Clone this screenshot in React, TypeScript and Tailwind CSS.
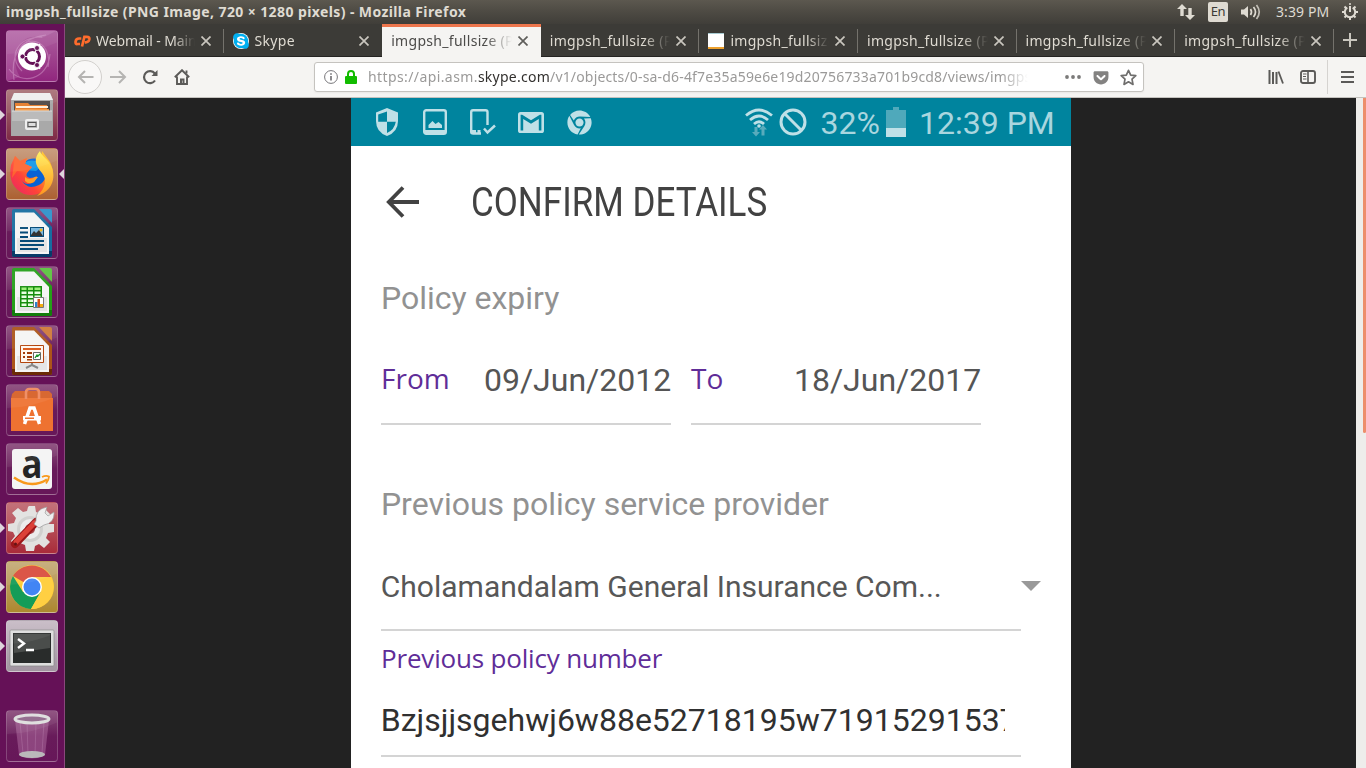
import type { ReactNode } from 'react';
import { FaChrome, FaGetPocket, FaSkype } from 'react-icons/fa';

const UI = "font-['Noto_Sans','Open_Sans',sans-serif]";

function Label({ children, className = '' }: { children: ReactNode; className?: string }) {
  return <span className={`inline-block origin-left whitespace-pre ${className}`}>{children}</span>;
}

function Panel() {
  return (
    <header className={`flex h-6 shrink-0 items-center justify-between bg-linear-to-b from-[#5c584f] via-[#4d4a43] to-[#403e39] pl-[6px] pr-[7px] ${UI}`}>
      <Label className="w-[465px] text-[14px] font-bold leading-6 tracking-[0.4px] text-[#dfdbd2]">
        imgpsh_fullsize (PNG Image, 720 × 1280 pixels) - Mozilla Firefox
      </Label>
      <div className="flex items-center text-[#dfdbd2]">
        <svg width="18" height="18" viewBox="0 0 18 18" fill="#dfdbd2" className="mr-[13px]">
          <path d="M5 1 0 6h3.300v7h3.400V6H10zM13 17l5-5h-3.300V5h-3.400v7H8z" />
        </svg>
        <span className="mr-[12px] flex h-5 w-5 items-center justify-center rounded-[2px] bg-[#dfdbd2] text-[13px] tracking-[-0.3px] text-[#3c3b37]">En</span>
        <svg width="22" height="18" viewBox="0 0 22 18" fill="none" stroke="#dfdbd2" strokeWidth="1.700" className="mr-[14px]">
          <path d="M1 6.500h3L8 3v12l-4-3.500H1z" fill="#dfdbd2" stroke="none" />
          <path d="M10.500 6q2 3 0 6M13.500 4q4 5 0 10" />
          <path d="M16.500 2q5.500 7 0 14" opacity=".8" />
        </svg>
        <Label className="w-[53px] text-[14px] leading-6 tracking-[0.1px]">3:39 PM</Label>
        <svg width="18" height="18" viewBox="0 0 18 18" fill="none" stroke="#dfdbd2" className="ml-[12px]">
          <path d="M6.300 4.600a5.200 5.200 0 1 0 5.400 0M9 3v6" strokeWidth="2" />
          <path d="m3.500 3.500 2 2m9-2-2 2M1 9h2.500M14.500 9H17M3.500 14.500l2-2m9 2-2-2M9 14.500V17" strokeWidth="2" />
          <path d="M9 0v2" strokeWidth="1.500" />
        </svg>
      </div>
    </header>
  );
}

function Tile({ bg, running, focused, children }: { bg: string; running?: boolean; focused?: boolean; children: ReactNode }) {
  return (
    <div className="relative flex h-[52px] w-[52px] shrink-0 items-center justify-center">
      {running && <span className="absolute -left-[6px] top-[21px] h-0 w-0 border-y-[5px] border-l-[5px] border-y-transparent border-l-[#ded5dc]" />}
      {focused && <span className="absolute -right-[6px] top-[21px] h-0 w-0 border-y-[5px] border-r-[5px] border-y-transparent border-r-[#ded5dc]" />}
      <div className={`h-[52px] w-[52px] overflow-hidden rounded-[4px] border border-white/20 ${bg}`}>
        <svg width="50" height="50" viewBox="1 1 50 50">
          {children}
          <path d="M0 0h52v12Q26 24 0 24z" fill="#fff" opacity=".06" />
        </svg>
      </div>
    </div>
  );
}

function Doc({ color, dark, fold, children }: { color: string; dark: string; fold: string; children: ReactNode }) {
  return (
    <>
      <path d="M8 2h20l18 18v28q0 2-2 2H8q-2 0-2-2V4q0-2 2-2z" fill={color} />
      <path d="M6 44h40v4q0 2-2 2H8q-2 0-2-2z" fill={dark} />
      <path d="M9 5.500h19L43 21v26H9z" fill="#f5f5f5" />
      <path d="M11 31h30v14H11z" fill="#e5e5e5" />
      <path d="M33 2h11q2 0 2 2v12z" fill={fold} />
      {children}
    </>
  );
}

function Launcher() {
  const purple = 'bg-linear-to-b from-[#8b4b7c] via-[#681b5a] to-[#671759]';
  return (
    <aside className="flex w-[65px] shrink-0 flex-col border-r border-[#8b477d] bg-[#651157] px-[6px] pt-[6px]">
      <div className="flex flex-col gap-[7px]">
        <Tile bg="bg-linear-to-b from-[#ad5e9f] to-[#91267e]">
          <g fill="none" stroke="#d49aca" strokeWidth="1.200" opacity=".5">
            <path d="M8 50C4 26 14 8 40 5M3 39C15 56 42 50 44 24M13 20C22 2 47 13 42 37M16 41C1 26 12 7 36 7" />
          </g>
          <path d="M0 0h52L36 8Q17 2 10 23 7 35 14 47L0 51z" fill="#e5b4db" opacity=".18" />
          <circle cx="26" cy="26.500" r="14" fill="#fff" />
          <circle cx="26.500" cy="26.500" r="7" fill="none" stroke="#651157" strokeWidth="3" />
          <g stroke="#fff" strokeWidth="1.200">
            <path d="M14 26.500h7M29 22l5-8M29 31l5 8" />
          </g>
          <g fill="#651157" stroke="#fff" strokeWidth=".8">
            <circle cx="16.500" cy="26.500" r="2.500" /><circle cx="31" cy="18" r="2.500" /><circle cx="31" cy="35" r="2.500" />
          </g>
        </Tile>
        <Tile bg="bg-linear-to-b from-[#a97378] to-[#7e2946]" running>
          <path d="m8 4 36 0 3 7v36H5V11z" fill="#a7a7a7" />
          <path d="m8 4 36 0 3 7H5z" fill="#eee" />
          <path d="M8 12h36v13H8z" fill="#4b4744" />
          <path d="M9 14h13l2 2h17v9H9z" fill="#e57b27" />
          <path d="M10 17h32v2H10z" fill="#fff0d8" /><path d="M9 20h34v2H9z" fill="#f49a45" />
          <path d="M6 22h40v25H6z" fill="#a9a9a9" /><path d="M6 22h40v10H6z" fill="#bbb" />
          <path d="M6 22h40" stroke="#d9d9d9" />
          <rect x="20" y="31" width="12" height="9" rx="1" fill="#b8b8b8" stroke="#eee" strokeWidth="2" />
          <rect x="22" y="33.500" width="8" height="4" fill="#ddd" stroke="#555" />
        </Tile>
        <Tile bg="bg-linear-to-b from-[#c59777] to-[#ac6132]" running focused>
          <defs>
            <linearGradient id="fox" x1="0" y1="1" x2="1" y2="0"><stop stopColor="#e8216d" /><stop offset=".35" stopColor="#ff4438" /><stop offset=".65" stopColor="#ff9a20" /><stop offset="1" stopColor="#ffdf35" /></linearGradient>
            <linearGradient id="tail" x1="0" y1="0" x2="0" y2="1"><stop stopColor="#fff05a" /><stop offset="1" stopColor="#ff9420" /></linearGradient>
          </defs>
          <circle cx="28" cy="25" r="14.500" fill="#0862d5" />
          <path d="M18 15q10-6 18 3l-6 5-11-1z" fill="#1598e8" />
          <path d="M5 17 9 8l5 5 7-3-2 6 7 3-5 6q-2 4 3 5 4 0 7-2l-3 6q-8 5-13-2 6 11 18 5 10-6 8-20l-6-7 1-7 8 11q7 14-2 25-10 11-24 7Q1 38 5 17z" fill="url(#fox)" />
          <path d="M34 3c1 5 8 7 12 17 5 14-4 25-15 28 9-8 10-17 5-23-8-9-8-15-2-22z" fill="url(#tail)" />
          <path d="m9 8 5 5 7-3-2 6 7 3-5 5-10-1-5 7z" fill="#ff6430" />
          <path d="M19 29q4 4 10 0h3l-4 5q-5 3-9-1z" fill="#ff9e28" />
        </Tile>
        <Tile bg={purple}>
          <Doc color="#176da0" dark="#073b68" fold="#2d91c9">
            <g fill="#064b78">
              <path d="M14 20h8v2h-8zM14 24.500h8v2h-8zM14 29h8v2h-8zM14 33h24v2H14zM14 37h24v2H14zM14 41h18v2H14z" />
              <path d="M24 20h14v10H24z" />
            </g>
            <path d="M25 21h12v8H25z" fill="#7fb9df" /><path d="m25 28 3-4 2 2 3-3 4 6H25z" fill="#333" /><circle cx="35" cy="23" r="1.500" fill="#f5b51b" />
          </Doc>
        </Tile>
        <Tile bg={purple}>
          <Doc color="#25a019" dark="#127d0b" fold="#5bc33e">
            <path d="M14 20h22v21H14z" fill="#168d0d" />
            <g fill="#9df079">
              <path d="M15.500 21.500h5v2.500h-5zM22 21.500h5v2.500h-5zM28.500 21.500h6v2.500h-6z" />
              <path fill="#e8ffe1" d="M15.500 25.500h5V28h-5zM22 25.500h5V28h-5zM28.500 25.500h6V28h-6zM15.500 29.500h5V32h-5zM22 29.500h5V32h-5zM28.500 29.500h6V32h-6zM15.500 33.500h5V36h-5zM22 33.500h5V36h-5zM15.500 37.500h5V40h-5zM22 37.500h5V40h-5z" />
            </g>
            <path d="M27.500 31.500h10v10h-10z" fill="#fff" stroke="#777" />
            <path d="M29 36h2.500v5H29z" fill="#2d82cc" /><path d="M31.500 33H34v8h-2.500z" fill="#d74e13" /><path d="M34 38h3v3h-3z" fill="#f3ad10" />
          </Doc>
        </Tile>
        <Tile bg={purple}>
          <Doc color="#ac541a" dark="#6b2b06" fold="#cf7938">
            <path d="M14.500 20.500h23v17h-23z" fill="#fff7ef" stroke="#b3450d" />
            <path d="M17 23h18v2H17z" fill="#dc5e21" />
            <path d="M17 27h2v2h-2zM17 31h2v2h-2zM21 27h5v2h-5zM21 31h5v2h-5zM21 34h5v1.500h-5z" fill="#a23c0a" />
            <path d="M27.500 27.500h7v7h-7z" fill="#fff" stroke="#666" /><path d="m29 33 2-3 1 1 2-2" fill="none" stroke="#179329" strokeWidth="1.300" />
            <path d="M26 38v2l-6 3m6-3 6 3" fill="none" stroke="#888" strokeWidth="2" />
          </Doc>
        </Tile>
        <Tile bg={purple}>
          <path d="m6 10 3-3h34l3 3v5H5z" fill="#d65f26" />
          <path d="M5 14h42v33H5z" fill="#ee7231" />
          <path d="M20 15V8.500q0-3.500 3.500-3.500h6q3.500 0 3.500 3.500V15" fill="none" stroke="#ef895e" strokeWidth="2.600" />
          <path d="M18.500 40 24 24h4l5.500 16" fill="none" stroke="#fff" strokeWidth="3.500" />
          <path d="M17 32h18v4.500H17z" fill="#fff" /><path d="M19 34.300h9" stroke="#ee7231" strokeWidth="1.400" />
        </Tile>
        <Tile bg={purple}>
          <rect x="6" y="6" width="40" height="40" rx="3" fill="#f4f4f4" />
          <text x="15.500" y="34.500" textLength="21" lengthAdjust="spacingAndGlyphs" fontFamily="Open Sans" fontWeight="700" fontSize="40" fill="#252525">a</text>
          <path d="M8 34.500q17 12 33 2" fill="none" stroke="#f8991c" strokeWidth="2.500" />
          <path d="M36 34q4-2 7-.5 0 3-3 7" fill="none" stroke="#f8991c" strokeWidth="1.800" />
        </Tile>
        <Tile bg="bg-linear-to-b from-[#bf6972] to-[#a92b3a]" running>
          <path d="m22 5 1-1h6l1 6 5 2 5-4 5 5-4 5 2 4h5v8l-6 1-2 5 4 4-6 6-5-4-4 2-1 5h-8l-1-6-5-2-5 4-4-6 4-5-2-4-5-1v-7l6-1 2-5-4-5 6-5 5 4 4-1z" fill="#e2e2e0" />
          <circle cx="24" cy="27" r="13" fill="#d0d0ce" /><circle cx="24" cy="27" r="10" fill="#ececec" /><circle cx="24" cy="27" r="5" fill="#aa4b50" />
          <path d="M9 42 30 20" stroke="#9d1719" strokeWidth="8" strokeLinecap="round" /><path d="M10 40 28.500 21" stroke="#dc4038" strokeWidth="5" strokeLinecap="round" />
          <path d="M30 19q-1-12 11-14l-2 6 3 3 6-4q1 11-10 13l-5 3-5-4z" fill="#eee" stroke="#999" strokeWidth=".7" />
          <circle cx="9.500" cy="42" r="1.500" fill="#641415" />
        </Tile>
        <Tile bg="bg-linear-to-b from-[#c5ab78] to-[#ad882e]" running>
          <circle cx="26" cy="26" r="22" fill="#fc3" />
          <path d="M26 26 7 15A22 22 0 0 1 45 16H26z" fill="#d94c3d" />
          <path d="M7 15A22 22 0 0 0 25 48L34.700 31H17z" fill="#149c58" />
          <path d="M45 16H26v10l8.700 5L25 48A22 22 0 0 0 45 16z" fill="#ffcf42" />
          <circle cx="26" cy="26" r="10" fill="#fff" /><circle cx="26" cy="26" r="8.500" fill="#4285f4" />
        </Tile>
        <Tile bg="bg-linear-to-b from-[#c7bac5] to-[#a194a0]" running>
          <rect x="4" y="10" width="44" height="36" rx="1" fill="#dedede" stroke="#888" strokeWidth=".7" />
          <path d="M7 13h38v30H7z" fill="#292c2b" /><path d="M8 14h36v14L8 33z" fill="#4a4d4b" />
          <path d="m12 19 6 4.500-6 4.500M20 30h8" fill="none" stroke="#fff" strokeWidth="2.400" />
        </Tile>
      </div>
      <div className="mt-[38px]">
        <Tile bg={purple}>
          <path d="m9 10 4 35q13 7 26 0l4-35z" fill="#ba79ab" opacity=".45" />
          <path d="m14 12 3 31m4-31 1 33m16-33-2 31m-6-31-1 33" stroke="#d4a5cc" strokeWidth=".7" opacity=".35" />
          <ellipse cx="26" cy="44.500" rx="13" ry="3.500" fill="#bab9ba" />
          <ellipse cx="26" cy="9" rx="17" ry="4" fill="#8f668a" stroke="#dedede" strokeWidth="3" />
        </Tile>
      </div>
    </aside>
  );
}

const tabs = [
  { title: 'Webmail - Main', icon: 'cpanel' },
  { title: 'Skype', icon: 'skype' },
  { title: 'imgpsh_fullsize (PNG', active: true },
  { title: 'imgpsh_fullsize (PNG' },
  { title: 'imgpsh_fullsize (PNG', icon: 'page' },
  { title: 'imgpsh_fullsize (PNG' },
  { title: 'imgpsh_fullsize (PNG' },
  { title: 'imgpsh_fullsize (PNG' },
];

function TabStrip() {
  return (
    <div className={`flex h-[33px] shrink-0 border-b border-[#252422] bg-[#3c3b37] ${UI}`}>
      {tabs.map((t, i) => (
        <div key={i} className={`relative flex h-[33px] w-[158.600px] shrink-0 items-center pr-[13px] ${t.active ? 'border-t-[3px] border-[#ed764d] bg-[#f5f4f2] pb-[3px] pl-[9px]' : 'pl-[9px]'}`}>
          {t.icon === 'cpanel' && (
            <svg width="17" height="16" viewBox="0 0 17 16" fill="none" stroke="#ff6c2c" strokeWidth="2.700" className="mr-[5px] shrink-0">
              <path d="M7.300 5.500H5Q2 5.500 1.600 8.500T3.600 11H6M8 13.500l2.400-9.700h2.300q3.200 0 2.600 2.700-.700 2.800-3.500 2.800h-1" />
            </svg>
          )}
          {t.icon === 'skype' && (
            <span className="mr-[6px] flex h-4 w-4 shrink-0 items-center justify-center rounded-full bg-white">
              <FaSkype className="h-[18px] w-[18px] shrink-0 text-[#00aff0]" />
            </span>
          )}
          {t.icon === 'page' && <span className="mr-[6px] h-4 w-4 shrink-0 border-b-2 border-t border-b-[#eda12e] border-t-[#a8cbd2] bg-white" />}
          <div className={`min-w-0 flex-1 overflow-hidden whitespace-nowrap text-[14px] leading-5 mask-r-from-78% mask-r-to-100% ${i === 0 ? 'tracking-[-0.1px]' : 'tracking-[0.3px]'} ${t.active ? 'text-[#4c4b49]' : 'text-[#dfdbd2]'}`}>{t.title}</div>
          <svg width="10" height="10" viewBox="0 0 10 10" className="ml-[6px] shrink-0" stroke={t.active ? '#5f5e5b' : '#c9c6be'} strokeWidth="1.700"><path d="m.500.500 9 9m0-9-9 9" /></svg>
          {!t.active && i !== 1 && <span className="absolute right-0 top-[5px] h-6 w-px bg-[#74726c]" />}
        </div>
      ))}
      <div className="flex flex-1 items-center justify-center pb-px">
        <svg width="14" height="14" stroke="#c9c6be" strokeWidth="2"><path d="M7 0v14M0 7h14" /></svg>
      </div>
    </div>
  );
}

function Toolbar() {
  return (
    <div className={`flex h-[41px] shrink-0 items-center border-b border-[#c4c2be] bg-[#f5f4f2] pl-[3px] pr-[12px] ${UI}`}>
      <span className="flex h-[34px] w-[34px] items-center justify-center rounded-full border border-[#d2d0cd] bg-[#f9f8f7]">
        <svg width="17" height="14" viewBox="0 0 17 14" fill="none" stroke="#b5b4b2" strokeWidth="2"><path d="M16.500 7H2M8 1 2 7l6 6" /></svg>
      </span>
      <svg width="17" height="14" viewBox="0 0 17 14" fill="none" stroke="#b5b4b2" strokeWidth="2" className="ml-[7.500px]"><path d="M0 7h15M9 1l6 6-6 6" /></svg>
      <svg width="16" height="16" viewBox="0 0 16 16" fill="none" stroke="#5b5a58" strokeWidth="2.200" className="ml-[15px]"><path d="M13 11.500A6 6 0 1 1 12.800 4.500" /><path d="M15.500 1v6h-6z" fill="#5b5a58" stroke="none" /></svg>
      <svg width="16" height="16" viewBox="0 0 16 16" fill="none" stroke="#5b5a58" strokeWidth="1.900" className="ml-[16px]"><path d="M.800 8.300 8 1.200l7.200 7.100M3 7.500V15h10V7.500" /><path d="M7 15v-4.500h2.500V15" strokeWidth="2" /><path d="M12.500 1.500v3" /></svg>
      <div className="ml-[124px] flex h-[30px] w-[830px] shrink-0 items-center rounded-[3px] border border-[#c5c3bf] bg-white pl-[9px] pr-[6px] shadow-xs">
        <svg width="14" height="14" viewBox="0 0 14 14" fill="none" stroke="#77767a"><circle cx="7" cy="7" r="6.400" /><path d="M7 6v4.500M7 3.200v1.500" strokeWidth="1.700" /></svg>
        <svg width="12" height="14" viewBox="0 0 12 14" className="ml-[7px]"><path d="M3 7V4a3 3 0 0 1 6 0v3" fill="none" stroke="#12bc00" strokeWidth="2" /><rect y="6" width="12" height="8" rx="1" fill="#12bc00" /></svg>
        <div className="ml-[11.500px] w-[660px] overflow-hidden whitespace-nowrap text-[14px] leading-6 tracking-[0.17px] text-[#9b9a99] mask-r-from-96% mask-r-to-100%">
          <span className="tracking-[0.4px]">https://api.asm.</span><span className="tracking-[0.25px] text-[#33312f]">skype.com</span>/v1/objects/0-sa-d6-4f7e35a59e6e19d20756733a701b9cd8/views/imgpsh
        </div>
        <svg width="16" height="4" viewBox="0 0 16 4" fill="#7b7a79" className="ml-auto"><circle cx="2" cy="2" r="1.900" /><circle cx="8" cy="2" r="1.900" /><circle cx="14" cy="2" r="1.900" /></svg>
        <FaGetPocket className="ml-[12px] h-[17px] w-4 text-[#838281]" />
        <svg width="17" height="17" viewBox="0 0 17 17" fill="none" stroke="#6f6e6d" strokeWidth="1.700" strokeLinejoin="round" className="ml-[11px]"><path d="m8.500 1.300 2.200 4.800 5.100.600-3.800 3.500 1 5.200-4.500-2.600L4 15.400l1-5.200-3.800-3.500 5.100-.600z" /></svg>
      </div>
      <svg width="16" height="14" viewBox="0 0 16 14" fill="none" stroke="#5b5a58" className="ml-auto"><path d="M1.500 0v14M5 2v12M8.500 2v12" strokeWidth="2" /><path d="m10.500 1.500 4.500 12" strokeWidth="1.800" /></svg>
      <svg width="16" height="14" viewBox="0 0 16 14" fill="none" stroke="#5b5a58" className="ml-[16px]"><rect x="1" y="1" width="14" height="12" rx="2" strokeWidth="1.900" /><path d="M8 1v12" strokeWidth="1.600" /><path d="M3 4h3.500M3 6.500h3M3 9h3.500" /></svg>
      <span className="ml-[11px] h-[34px] w-px bg-[#d5d3d0]" />
      <svg width="13" height="12" stroke="#5b5a58" strokeWidth="2" className="ml-[13px]"><path d="M0 1h13M0 6h13M0 11h13" /></svg>
    </div>
  );
}

function StatusBar() {
  const c = '#bfe0e7';
  return (
    <div className="flex h-12 items-center bg-[#00849e] pl-[24px] font-[Roboto,sans-serif] text-[32px] text-[#a9d6df]">
      <svg width="24" height="28" viewBox="0 0 24 28"><path d="M12 0 1 4.500V13q0 11 11 15 11-4 11-15V4.500z" fill={c} /><path d="M12 3.500v10.300H3.200V6.500zM12 13.800h8.800q-1.300 8-8.800 11.200z" fill="#00849e" /></svg>
      <svg width="24" height="26" viewBox="0 0 24 26" className="ml-[24px]"><rect x="1.200" y="1.200" width="21.600" height="23.600" rx="2" fill="none" stroke={c} strokeWidth="2.400" /><path d="M1 21h22v4H1zM5.500 19v-3l4-4 3 3 3-2 3.500 3v3z" fill={c} /></svg>
      <svg width="26" height="26" viewBox="0 0 26 26" fill="none" stroke={c} className="ml-[23px]"><path d="M17.500 16V3q0-1.800-2-1.800H3Q1.200 1.200 1.200 3v20q0 1.500 2 1.500H11" strokeWidth="2.400" /><path d="M1 22.500h5M7.500 22.500h3" strokeWidth="3" /><path d="m14 19.500 3.500 4 7.500-7" strokeWidth="2.500" /></svg>
      <svg width="26" height="21" viewBox="2 4 20 16" preserveAspectRatio="none" className="ml-[22px]"><path fillRule="evenodd" fill={c} d="M20 18h-2V9.250L12 13 6 9.250V18H4V6h1.200l6.800 4.250L18.800 6H20zM20 4H4a2 2 0 0 0-2 2v12a2 2 0 0 0 2 2h16a2 2 0 0 0 2-2V6a2 2 0 0 0-2-2z" /></svg>
      <FaChrome className="ml-[23px] h-[25px] w-[25px] shrink-0 text-[#bfe0e7]" />
      <svg width="28" height="29" viewBox="0 0 28 29" fill="none" stroke={c} strokeWidth="2.800" className="ml-[153px]"><path d="M1 7.500q13-11 26 0M5 12q9-8 18 0M9 16q5-4.500 10 0" /><circle cx="14" cy="18" r="1.800" fill={c} stroke="none" /><path d="M7 24h2.500v-5h3v5H15l-4 4.500zM14 21.500l4-4.500 4 4.500h-2.500v6h-3v-6z" fill="#58abbc" stroke="none" /></svg>
      <svg width="28" height="28" viewBox="0 0 28 28" fill="none" stroke={c} strokeWidth="3" className="ml-[6.500px]"><circle cx="14" cy="14" r="12" /><path d="m5.500 5.500 17 17" /></svg>
      <Label className="ml-[13.500px] w-[60px] pt-[2px] leading-[48px]">32%</Label>
      <svg width="20" height="30" viewBox="0 0 20 30" className="ml-[5px]"><path d="M0 3h7V0h6v3h7v18H0z" fill="#4fa9bb" /><path d="M0 21h20v9H0z" fill={c} /></svg>
      <Label className="ml-[13.500px] w-[134px] pt-[2px] leading-[48px]">12:39 PM</Label>
    </div>
  );
}

function DateField({ label, value }: { label: string; value: string }) {
  return (
    <div className="flex h-[89px] w-[290px] items-center justify-between border-b-2 border-[#d4d4d4]">
      <span className="pb-[4px] pl-[0.500px] font-['Open_Sans',sans-serif] text-[28px] text-[#5f2d98]">{label}</span>
      <span className="-mr-[0.700px] text-[32px] text-[#555]">{value}</span>
    </div>
  );
}

function Screenshot() {
  return (
    <div className="flex h-[670px] w-[720px] shrink-0 flex-col overflow-hidden bg-white font-[Roboto,sans-serif]">
      <StatusBar />
      <div className="flex h-[112px] shrink-0 items-center pl-[35.500px]">
        <svg width="33" height="32" viewBox="0 0 33 32" fill="none" stroke="#424242" strokeWidth="3.800"><path d="M33 16H3M17 1.500 2.800 16 17 30.500" /></svg>
        <Label className="ml-[51.500px] mt-[2px] scale-x-[0.875] text-[40px] leading-[48px] text-[#424242]">CONFIRM DETAILS</Label>
      </div>
      <div className="flex flex-col pl-[30px]">
        <div className="flex h-[78px] items-center pl-[0.400px] pt-[2px] text-[32px] text-[#929292]"><Label>Policy expiry</Label></div>
        <div className="flex gap-[20px]">
          <DateField label="From" value="09/Jun/2012" />
          <DateField label="To" value="18/Jun/2017" />
        </div>
        <div className="mt-[55px] flex h-12 items-center pl-[0.400px] text-[32px] text-[#929292]"><Label>Previous policy service provider</Label></div>
        <div className="flex h-[103px] w-[640px] items-center border-b-2 border-[#d4d4d4] pb-[1px] pl-[0.300px] pt-[16px] text-[30px] text-[#575757]">
          <Label>Cholamandalam General Insurance Com...</Label>
          <svg width="20" height="10" className="-mr-[20px] ml-auto shrink-0"><path d="M0 0h20L10 10z" fill="#999" /></svg>
        </div>
        <div className="flex h-[56px] items-center pb-[2px] pl-[0.500px] font-['Open_Sans',sans-serif] text-[26px] tracking-[-0.180px] text-[#5f2d98]"><Label>Previous policy number</Label></div>
        <div className="flex h-[70px] w-[640px] items-center border-b-2 border-[#d4d4d4] pb-[2px] text-[32px] text-[#303030]">
          <div className="w-[624px] overflow-hidden whitespace-nowrap pl-[0.300px]">Bzjsjjsgehwj6w88e52718195w71915291537</div>
        </div>
      </div>
    </div>
  );
}

export default function App() {
  return (
    <div className="flex h-[768px] w-[1366px] flex-col overflow-hidden bg-[#222]">
      <Panel />
      <div className="flex min-h-0 flex-1">
        <Launcher />
        <main className="flex min-w-0 flex-1 flex-col">
          <TabStrip />
          <Toolbar />
          <div className="flex min-h-0 flex-1">
            <div className="flex flex-1 justify-center bg-[#222]"><Screenshot /></div>
            <div className="flex w-[10px] justify-end bg-[#eeedeb]">
              <div className="h-[335px] w-[3px] rounded-b-sm bg-[#ed8e6b]" />
            </div>
          </div>
        </main>
      </div>
    </div>
  );
}
